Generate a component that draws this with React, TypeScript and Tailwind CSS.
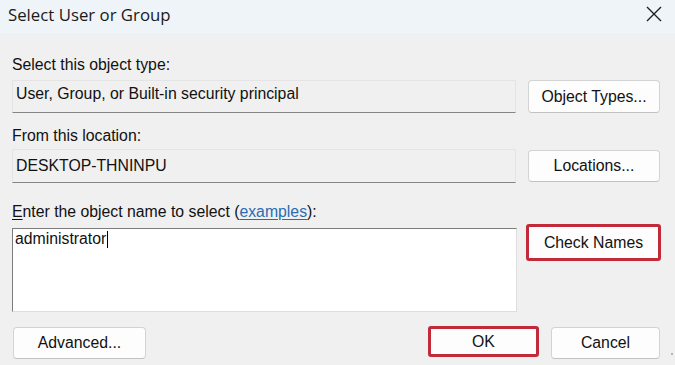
import React from "react";

const body = { fontFamily: '"Liberation Sans", Arial, sans-serif' };
const title = { fontFamily: '"Segoe UI", "Open Sans", "Noto Sans", sans-serif' };

function Btn({ children, className = "" }: { children: React.ReactNode; className?: string }) {
  return (
    <div
      className={
        "flex items-center justify-center bg-[#fdfdfd] border border-[#d3d3d3] border-b-[#c2c2c2] rounded-[4px] text-[15.8px] leading-[18px] text-[#111111] " +
        className
      }
    >
      {children}
    </div>
  );
}

function RedBtn({ children, className = "" }: { children: React.ReactNode; className?: string }) {
  return (
    <div
      className={
        "flex items-center justify-center bg-[#fdfdfd] border-[3.5px] border-[#c22a39] rounded-[3px] text-[15.8px] leading-[18px] text-[#111111] " +
        className
      }
    >
      {children}
    </div>
  );
}

export default function App() {
  return (
    <div className="w-[675px] h-[365px] bg-[#f0f0f0] overflow-hidden relative text-[#111111]" style={body}>
      {/* Title bar */}
      <div className="h-[33px] bg-[#eff4f9] flex items-start justify-between pl-[8px] pr-[12px]">
        <span className="text-[16.8px] leading-[30px] text-[#1a1a1a]" style={title}>
          Select User or Group
        </span>
        <svg width="18" height="18" viewBox="0 0 18 18" className="mt-[5px]">
          <path d="M2 2 L16 16 M16 2 L2 16" stroke="#1f1f1f" strokeWidth="1.4" fill="none" />
        </svg>
      </div>

      <div className="pl-[12px] pr-[15px] pt-[23px] text-[15.8px] leading-[18px]">
        {/* Section 1 */}
        <div className="flex justify-between">
          <div className="w-[504px] flex flex-col">
            <div className="h-[18px]">Select this object type:</div>
            <div className="mt-[6px] h-[33px] border border-[#e4e4e4] border-b-[#858585] pl-[3px] pt-[4px]">
              User, Group, or Built-in security principal
            </div>
          </div>
          <Btn className="w-[132px] h-[33px] mt-[24px]">Object Types...</Btn>
        </div>

        {/* Section 2 */}
        <div className="flex justify-between mt-[14px]">
          <div className="w-[504px] flex flex-col">
            <div className="h-[18px]">From this location:</div>
            <div className="mt-[4px] h-[34px] border border-[#e4e4e4] border-b-[#858585] pl-[3px] pt-[7px]">
              DESKTOP-THNINPU
            </div>
          </div>
          <Btn className="w-[132px] h-[32px] mt-[23px]">Locations...</Btn>
        </div>

        {/* Section 3 */}
        <div className="flex justify-between mt-[20px]">
          <div className="w-[505px] flex flex-col">
            <div className="h-[18px]">
              <span className="underline underline-offset-2">E</span>nter the object name to select (
              <span className="text-[#2a6cb3] underline underline-offset-2">examples</span>):
            </div>
            <div className="mt-[7px] h-[84px] bg-white border border-[#dedede] border-t-[#7c7c7c] border-l-[#7c7c7c] pl-[2px] pt-[1px] flex items-start">
              <span>administrator</span>
              <span className="inline-block w-0 h-[17px] border-l border-black ml-[1px] mt-[1px]"></span>
            </div>
          </div>
          <RedBtn className="w-[135px] h-[37px] mt-[21px] -mr-[1px]">Check Names</RedBtn>
        </div>

        {/* Bottom row */}
        <div className="flex items-start mt-[15px]">
          <Btn className="w-[133px] h-[32px] ml-[1px]">Advanced...</Btn>
          <RedBtn className="w-[111px] h-[31px] ml-auto -mt-[1px]">OK</RedBtn>
          <Btn className="w-[109px] h-[32px] ml-[12px]">Cancel</Btn>
        </div>
      </div>

      {/* resize grip */}
      <div className="absolute right-[2px] bottom-[10px] w-[2px] h-[2px] bg-[#b5b5b5]"></div>
    </div>
  );
}
